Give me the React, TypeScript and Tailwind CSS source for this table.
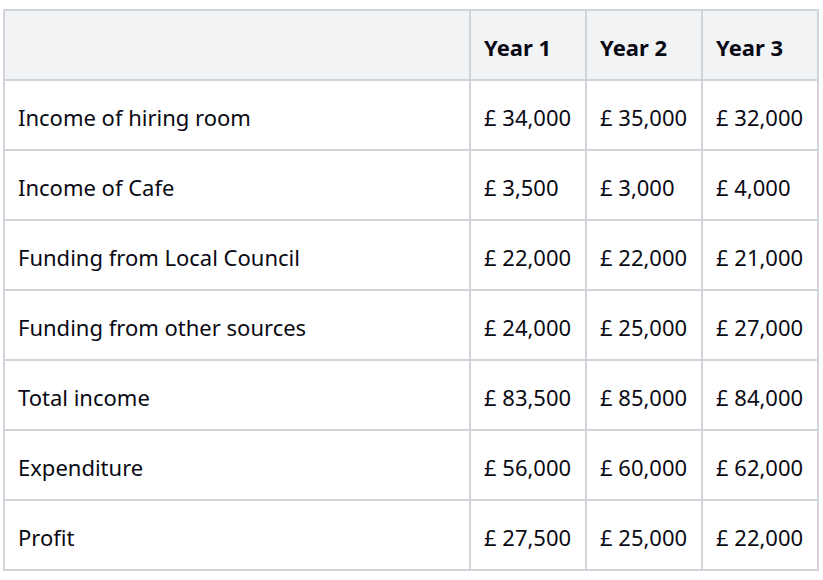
const rows: [string, string, string, string][] = [
  ['Income of hiring room', '£ 34,000', '£ 35,000', '£ 32,000'],
  ['Income of Cafe', '£ 3,500', '£ 3,000', '£ 4,000'],
  ['Funding from Local Council', '£ 22,000', '£ 22,000', '£ 21,000'],
  ['Funding from other sources', '£ 24,000', '£ 25,000', '£ 27,000'],
  ['Total income', '£ 83,500', '£ 85,000', '£ 84,000'],
  ['Expenditure', '£ 56,000', '£ 60,000', '£ 62,000'],
  ['Profit', '£ 27,500', '£ 25,000', '£ 22,000'],
];

export default function App() {
  return (
    <div className="bg-white w-[823px] h-[580px] pl-[3px] pt-[9px] font-['Noto_Sans','Open_Sans',sans-serif] text-[#0a0a14]">
      <table className="border-collapse border-2 border-[#d1d5db] w-[816px] table-fixed text-[22px] leading-none">
        <colgroup>
          <col className="w-[466px]" />
          <col className="w-[116px]" />
          <col className="w-[116px]" />
          <col className="w-[116px]" />
        </colgroup>
        <thead>
          <tr className="h-[70px] bg-[#f2f3f5]">
            <th className="border-2 border-[#d1d5db]"></th>
            <th className="border-2 border-[#d1d5db] pl-[13px] pt-[3px] text-left font-bold">Year 1</th>
            <th className="border-2 border-[#d1d5db] pl-[13px] pt-[3px] text-left font-bold">Year 2</th>
            <th className="border-2 border-[#d1d5db] pl-[13px] pt-[3px] text-left font-bold">Year 3</th>
          </tr>
        </thead>
        <tbody>
          {rows.map((r) => (
            <tr key={r[0]} className="h-[70px]">
              {r.map((cell, i) => (
                <td key={i} className="border-2 border-[#d1d5db] pl-[13px] pt-[3px] whitespace-nowrap">
                  {cell}
                </td>
              ))}
            </tr>
          ))}
        </tbody>
      </table>
    </div>
  );
}
